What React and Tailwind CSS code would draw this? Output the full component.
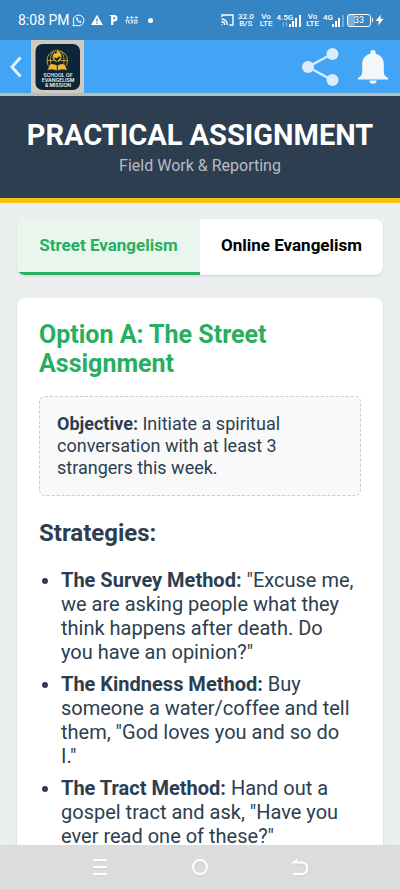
const strategies = [
    {
        name: "The Survey Method:",
        text: '"Excuse me, we are asking people what they think happens after death. Do you have an opinion?"',
    },
    {
        name: "The Kindness Method:",
        text: 'Buy someone a water/coffee and tell them, "God loves you and so do I."',
    },
    {
        name: "The Tract Method:",
        text: 'Hand out a gospel tract and ask, "Have you ever read one of these?"',
    },
];

function Signal({ faded }) {
    return (
        <svg width="13" height="13" viewBox="0 0 13 13" fill="currentColor">
            <rect x="0" y="10" width="2" height="3" />
            <rect x="3" y="7" width="2" height="6" />
            <rect x="6" y="4" width="2" height="9" />
            <rect x="10" y="1" width="2" height="12" opacity={faded ? 0.3 : 1} />
        </svg>
    );
}

function Stacked({ top, bottom }) {
    return (
        <div className="flex flex-col items-center text-[8px] leading-[7px] font-medium">
            <span>{top}</span>
            <span>{bottom}</span>
        </div>
    );
}

function StatusBar() {
    return (
        <div className="flex h-10 shrink-0 items-center justify-between bg-[#3584c4] pr-4 pl-[18px] text-white">
            <div className="flex items-center">
                <span className="text-[14px] leading-5">8:08 PM</span>
                <svg className="ml-[2px]" width="13" height="13" viewBox="0 0 13 13" fill="none" stroke="currentColor">
                    <path d="M1 12l.8-3A5.4 5.4 0 1 1 4 11.2z" />
                    <path d="M4.2 4.1c.1 2.4 2.2 4.5 4.6 4.7l.9-1-1.5-.9-.8.6c-.8-.4-1.4-1-1.8-1.8l.6-.8-.8-1.5z" fill="currentColor" strokeWidth=".3" />
                </svg>
                <svg className="ml-[6px]" width="12" height="12" viewBox="0 0 12 12" fill="currentColor">
                    <path d="M6 .8L12 11H0z" />
                    <path d="M6 4.2v3.6M6 8.7v1.3" stroke="#3584c4" strokeWidth="1.2" />
                </svg>
                <svg className="ml-[6px]" width="10" height="12" viewBox="0 0 10 12" fill="none" stroke="currentColor">
                    <path d="M3.2 11V2.2H5.3a2 2 0 0 1 0 4.2H3.5" strokeWidth="2.2" />
                    <path d="M.7 1.6h2" />
                </svg>
                <svg className="ml-[6px] opacity-80" width="14" height="8" viewBox="0 0 14 8" fill="none" stroke="currentColor">
                    <path d="M1 1.5h3.5M5.5 1.5H9M10 1.5h3M2.5 0v3.5M6.5 0v3M11 0v3M0 4.2h13M1.5 4.5v3M3.5 5v2h2M6 7.5l1-2.5 1 2.5M9.5 5v2.2H12V5z" />
                </svg>
                <span className="ml-[9px] size-[5px] rounded-full bg-white" />
            </div>
            <div className="flex items-center">
                <svg width="13" height="12" viewBox="0 0 13 12" fill="none" stroke="currentColor" strokeWidth="1.4">
                    <path d="M1 3V1h11v10H8.5M.5 5A6 6 0 0 1 6.5 11M.5 7.7A3.3 3.3 0 0 1 3.8 11" />
                    <circle cx="1.2" cy="10.6" r=".7" fill="currentColor" stroke="none" />
                </svg>
                <div className="ml-1">
                    <Stacked top="32.0" bottom="B/S" />
                </div>
                <div className="ml-[6px]">
                    <Stacked top="Vo" bottom="LTE" />
                </div>
                <div className="ml-1 flex items-center">
                    <div className="flex flex-col items-center text-[8px] leading-[7px] font-medium">
                        <span>4.5G</span>
                        <svg width="6" height="6" viewBox="0 0 6 6" fill="none" stroke="currentColor" opacity=".4">
                            <path d="M1.5 5.5V1M4.5.5V5M.5 2l1-1M5.5 4l-1 1" />
                        </svg>
                    </div>
                    <div className="-ml-1">
                        <Signal />
                    </div>
                </div>
                <div className="ml-1">
                    <Stacked top="Vo" bottom="LTE" />
                </div>
                <div className="ml-1 flex items-center">
                    <span className="pb-[6px] text-[8px] leading-[7px] font-medium">4G</span>
                    <div className="-ml-px">
                        <Signal faded />
                    </div>
                </div>
                <div className="ml-[2px] flex items-center">
                    <span className="flex h-[13px] w-6 items-center justify-center rounded-[3px] border border-white bg-linear-to-r from-white/35 from-33% to-transparent to-33% text-[9px] leading-[11px]">
                        33
                    </span>
                    <span className="ml-px h-1 w-px bg-white" />
                </div>
                <svg className="ml-[2px]" width="9" height="12" viewBox="0 0 9 12" fill="currentColor">
                    <path d="M6 .5L.5 7H4l-1 4.5L8.7 4.8H5.3z" />
                </svg>
            </div>
        </div>
    );
}

function Logo() {
    return (
        <svg className="block h-[53px] w-[53px]" viewBox="0 0 53 53">
            <rect width="53" height="53" fill="#cfc9c0" />
            <rect x="4.5" y="4" width="44.500" height="46" rx="7" fill="#0c2538" />
            <g fill="none" stroke="#c7982a" strokeWidth="1">
                <path d="M19 28a10.300 10.300 0 1 1 14.500 0" />
                <path d="M21 27c-2.500-5-2-12 2-16M31.500 27c2.500-5 2-12-2-16M16 20.500h20.500" />
            </g>
            <path d="M26 7c.4 3.500 5 5.500 4.800 10-.1 3-2 4.600-4.600 5.500-3-.9-4.700-2.500-4.700-5.500 0-2.500 1.500-3.200 2-5.200.8.500 1.100 1.200 1.200 2C26 11.800 26.600 9.500 26 7z" fill="#f5b82e" stroke="#0c2538" strokeWidth=".6" />
            <path d="M26.300 24.500v-6M26.300 20.500c-2 0-2.200-1.200-2.600-2.500 1.800 0 2.600.9 2.600 2.500zM26.300 19.500c0-1.700.8-2.600 2.500-2.600-.1 1.700-.8 2.600-2.500 2.600z" fill="#0c2538" stroke="#0c2538" strokeWidth=".9" />
            <path d="M19 23.800c3-.5 5.800.2 7.300 1.800 1.500-1.600 4.300-2.300 7.300-1.800l3 6.600c-4-.9-7.500-.7-10.300.6-2.800-1.300-6.300-1.500-10.300-.6z" fill="#f5b82e" stroke="#0c2538" strokeWidth=".8" />
            <path d="M26.300 25.500V31" stroke="#0c2538" />
            <g fill="#f4f4f0" fontFamily="Inter, sans-serif" fontSize="5" fontWeight="600" textAnchor="middle">
                <text x="27" y="36.500">SCHOOL OF</text>
                <text x="27" y="41.500">EVANGELISM</text>
                <text x="27" y="46.500">&amp; MISSION</text>
            </g>
        </svg>
    );
}

function AppBar() {
    return (
        <div className="flex shrink-0 items-center border-b-3 border-[#b9bcbd] bg-[#42a4f5] pr-3 pl-[9px] text-white">
            <button type="button" aria-label="Back" className="mr-[9px]">
                <svg className="block" width="13" height="22" viewBox="0 0 13 22" fill="none" stroke="currentColor" strokeWidth="3" opacity=".85">
                    <path d="M11.5 1.5L3 11l8.5 9.5" />
                </svg>
            </button>
            <Logo />
            <button type="button" aria-label="Share" className="ml-auto">
                <svg className="block" width="37" height="38" viewBox="0 0 37 38" fill="#d9ecfd">
                    <path d="M30 6L6 19l24 13" fill="none" stroke="#d9ecfd" strokeWidth="2.5" />
                    <circle cx="6" cy="19" r="6" />
                    <circle cx="30.5" cy="6" r="6" />
                    <circle cx="30.5" cy="32" r="6" />
                </svg>
            </button>
            <button type="button" aria-label="Notifications" className="ml-[19px]">
                <svg className="block" width="30" height="34" viewBox="0 0 30 34" fill="#f4f7fa">
                    <path d="M15 0a2.600 2.600 0 0 0-2.600 2.800v1C7 5 4.200 9 4.200 14v8c0 3-1.500 4.500-4.200 6v1.500h30V28c-2.700-1.500-4.200-3-4.200-6v-8c0-5-2.800-9-8.200-10.200v-1A2.600 2.600 0 0 0 15 0z" />
                    <path d="M11.500 30.500h7a3.500 3.200 0 0 1-7 0z" />
                </svg>
            </button>
        </div>
    );
}

function NavBar() {
    return (
        <div className="flex h-11 shrink-0 items-center justify-center gap-[84px] bg-[#dcdcdc] text-white">
            <button type="button" aria-label="Recent apps">
                <svg className="block drop-shadow-xs" width="16" height="18" viewBox="0 0 16 18" fill="none" stroke="currentColor" strokeWidth="2">
                    <path d="M1 2h14M1 9h14M1 16h14" />
                </svg>
            </button>
            <button type="button" aria-label="Home">
                <svg className="block drop-shadow-xs" width="16" height="18" viewBox="0 0 16 18" fill="none" stroke="currentColor" strokeWidth="2">
                    <circle cx="8" cy="9" r="7" />
                </svg>
            </button>
            <button type="button" aria-label="Go back">
                <svg className="block drop-shadow-xs" width="16" height="18" viewBox="0 0 16 18" fill="none" stroke="currentColor" strokeWidth="2">
                    <path d="M5.5 1.5L1.5 4.5h8.500a5 5.500 0 0 1 0 11.500H1" />
                </svg>
            </button>
        </div>
    );
}

function App() {
    return (
        <div className="flex h-screen flex-col overflow-hidden bg-[#ebeff0] font-[Roboto,sans-serif] text-[#2c3e50]">
            <StatusBar />
            <AppBar />

            <main className="min-h-0 flex-1 overflow-hidden">
                <header className="border-b-5 border-[#f1c40f] bg-[#2c3e50] pt-[22px] pb-[22px] text-center">
                    <h1 className="text-[29px] leading-[34px] font-bold text-white">
                        PRACTICAL ASSIGNMENT
                    </h1>
                    <p className="mt-1 text-[16px] leading-5 text-[#b6bdc3]">
                        Field Work &amp; Reporting
                    </p>
                </header>

                <div className="px-[17px] pt-4">
                    <div className="grid grid-cols-2 overflow-hidden rounded-lg bg-white text-[17px] leading-5 font-bold shadow">
                        <button
                            type="button"
                            className="border-b-3 border-[#27ae60] bg-[#e8f6ed] pt-4 pb-[17px] text-[#27ae60]"
                        >
                            Street Evangelism
                        </button>
                        <button
                            type="button"
                            className="border-b-3 border-transparent pt-4 pb-[17px] text-black"
                        >
                            Online Evangelism
                        </button>
                    </div>

                    <section className="mt-[23px] rounded-lg bg-white p-[22px] shadow">
                        <h2 className="text-[25px] leading-[29px] font-bold text-[#27ae60]">
                            Option A: The Street Assignment
                        </h2>
                        <p className="mt-[18px] rounded-md border border-dashed border-[#cccccc] bg-[#f9f9f9] px-[17px] py-4 text-[18px] leading-[22px]">
                            <strong>Objective:</strong> Initiate a spiritual
                            conversation with at least 3 strangers this week.
                        </p>
                        <h3 className="mt-[23px] text-[24px] leading-[29px] font-bold">
                            Strategies:
                        </h3>
                        <ul className="mt-5 list-disc space-y-2 pr-1 pl-[22px] text-[20px] leading-6">
                            {strategies.map((s) => (
                                <li key={s.name}>
                                    <strong>{s.name}</strong> {s.text}
                                </li>
                            ))}
                        </ul>
                    </section>
                </div>
            </main>

            <NavBar />
        </div>
    );
}

export default App;
